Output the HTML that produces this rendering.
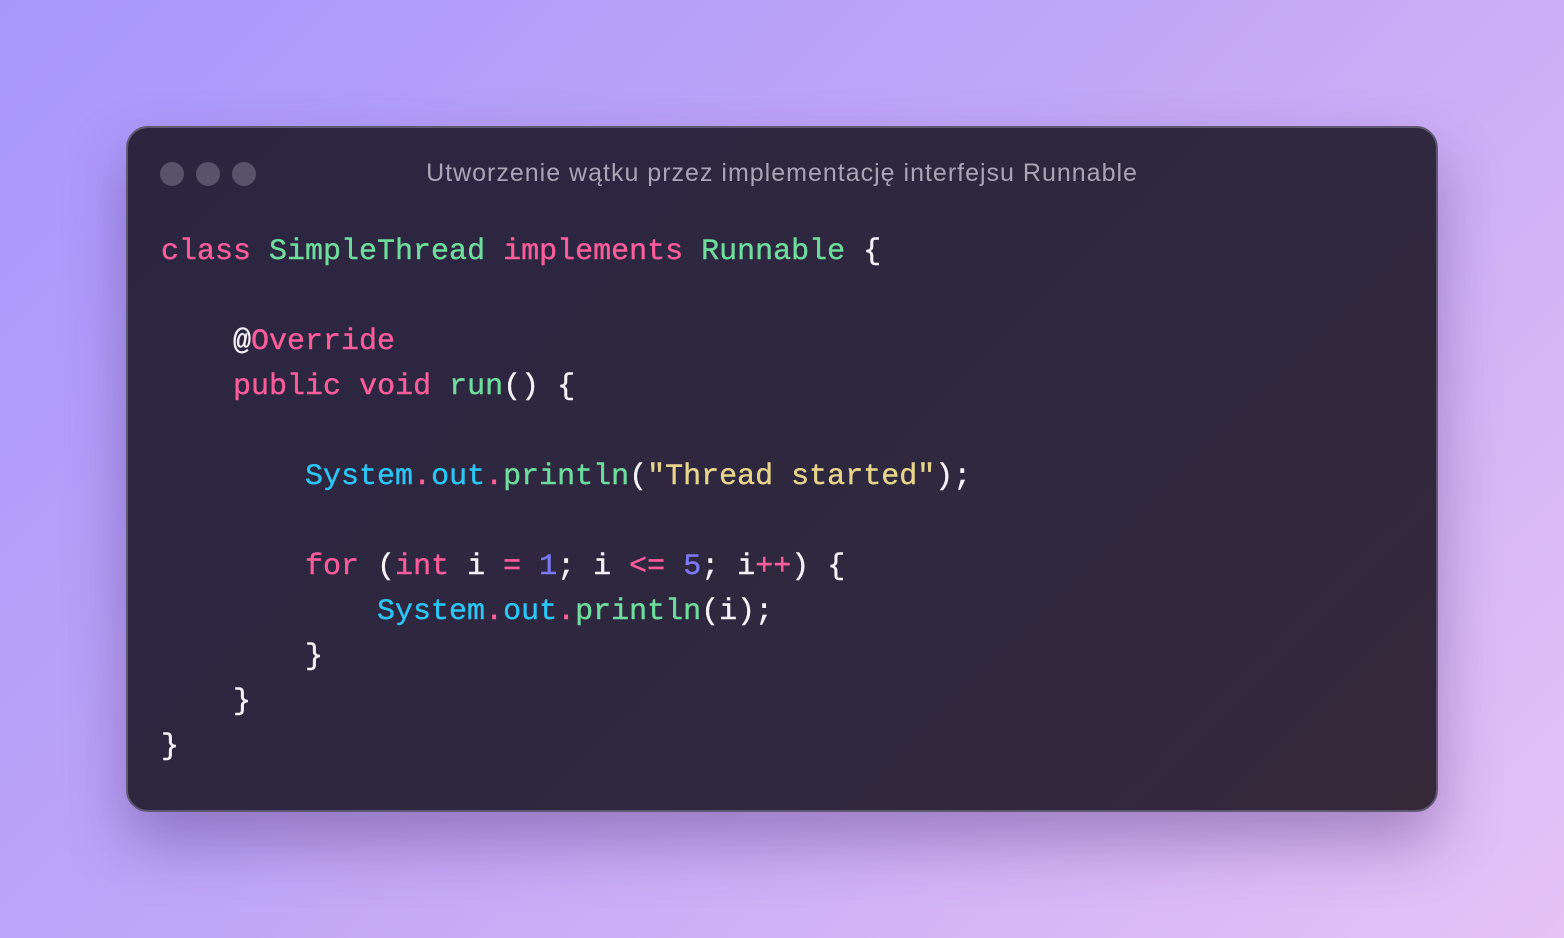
<!DOCTYPE html>
<html><head><style>
html,body{margin:0;width:1564px;height:938px;overflow:hidden}
body{background:linear-gradient(135deg,#a797fd 0%,#c3a8f6 50%,#e6c2f6 100%);position:relative;font-family:"Liberation Sans",sans-serif}
.win{position:absolute;left:126px;top:126px;width:1308px;height:682px;border:2px solid #5e5872;border-radius:22px;background:linear-gradient(135deg,#2b2540 0%,#2f283f 60%,#352839 100%);box-shadow:0 30px 60px rgba(60,30,100,.35)}
.dot{position:absolute;top:34px;width:24px;height:24px;border-radius:50%;background:#58526a}
.title{position:absolute;top:31px;left:0;right:0;text-align:center;color:#aaa4b6;font-size:25px;letter-spacing:1px}
pre{position:absolute;left:33px;top:102px;margin:0;font-family:"Liberation Mono",monospace;font-size:30px;line-height:45px;color:#f4f1f8;-webkit-text-stroke:0.4px currentColor}
.k{color:#fb5c9a}.g{color:#6edc9c}.c{color:#2cc5f4}.s{color:#e6d58a}.n{color:#7c79f2}
</style></head><body>
<div class="win">
<div class="dot" style="left:32px"></div><div class="dot" style="left:68px"></div><div class="dot" style="left:104px"></div>
<div class="title">Utworzenie wątku przez implementację interfejsu Runnable</div>
<pre><span class="k">class</span> <span class="g">SimpleThread</span> <span class="k">implements</span> <span class="g">Runnable</span> {

    @<span class="k">Override</span>
    <span class="k">public</span> <span class="k">void</span> <span class="g">run</span>() {

        <span class="c">System</span><span class="k">.</span><span class="c">out</span><span class="k">.</span><span class="g">println</span>(<span class="s">"Thread started"</span>);

        <span class="k">for</span> (<span class="k">int</span> i <span class="k">=</span> <span class="n">1</span>; i <span class="k">&lt;=</span> <span class="n">5</span>; i<span class="k">++</span>) {
            <span class="c">System</span><span class="k">.</span><span class="c">out</span><span class="k">.</span><span class="g">println</span>(i);
        }
    }
}</pre>
</div>
</body></html>
